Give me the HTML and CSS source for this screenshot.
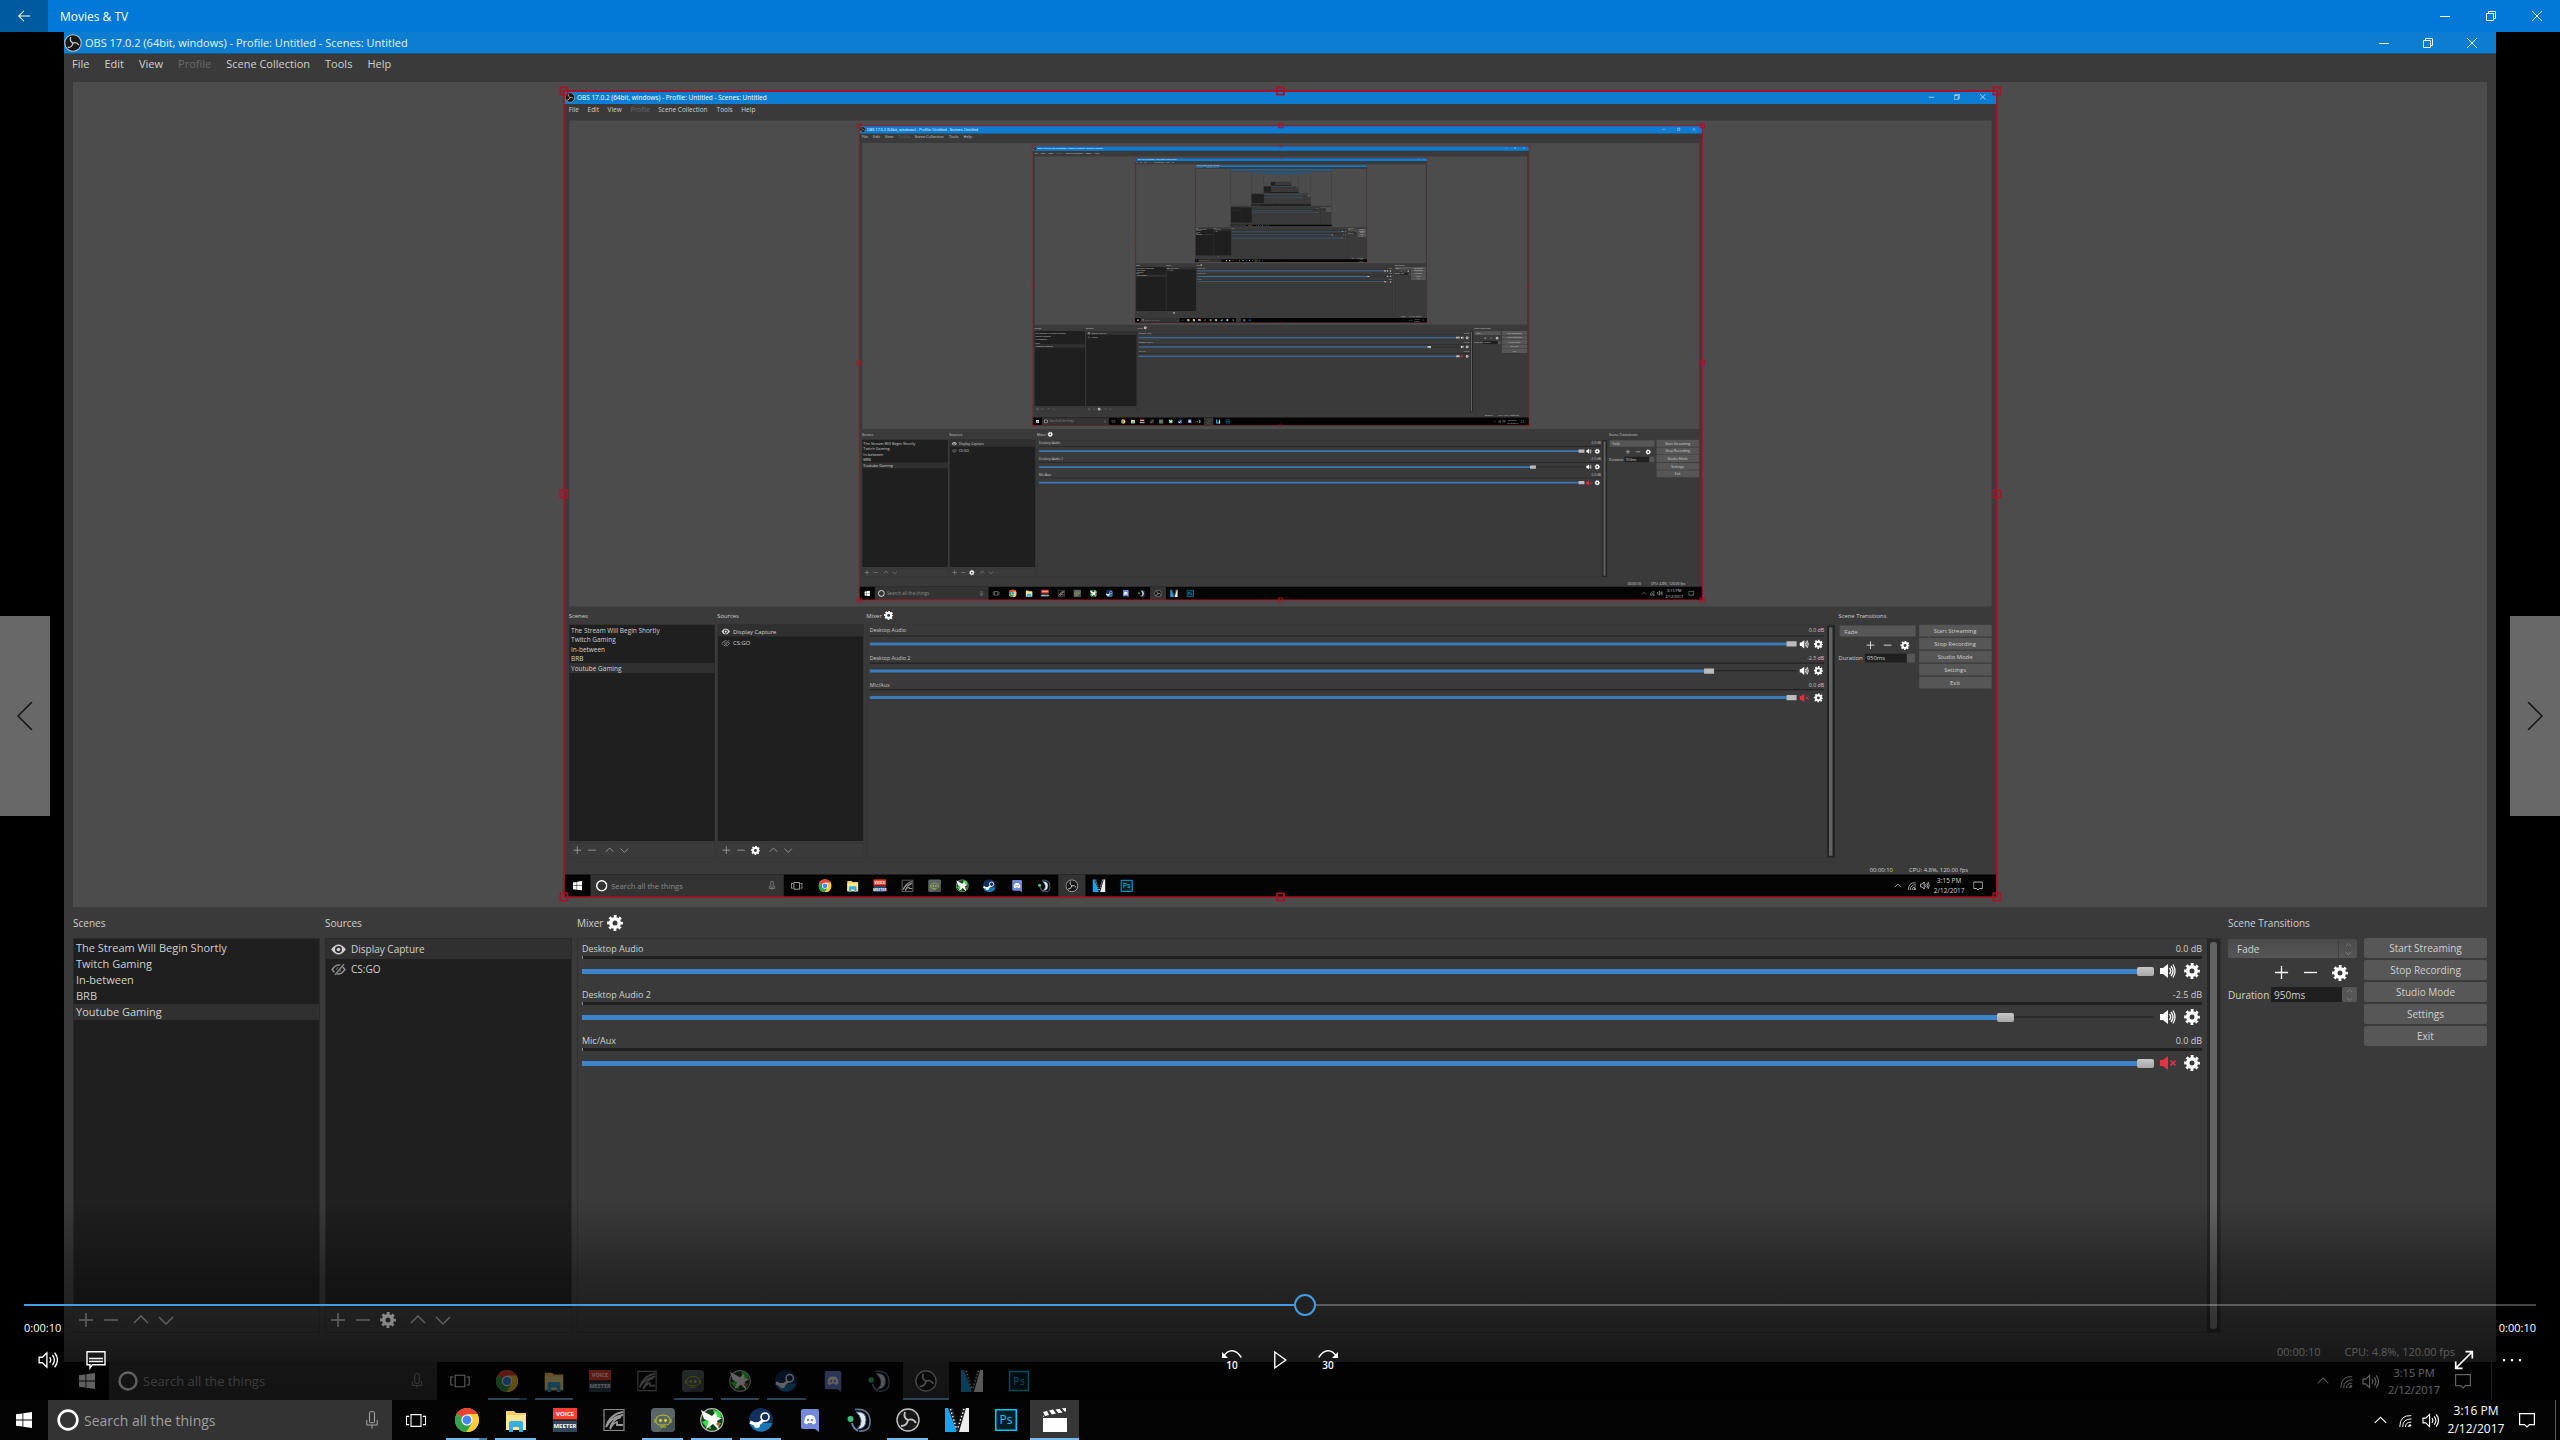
FILE: index.html
```html
<!DOCTYPE html>
<html lang="en">
<head>
    <meta charset="utf-8">
    <title>Movies &amp; TV</title>
    <link rel="stylesheet" href="styles.css">
</head>
<body>
    <!-- icon sprite -->
    <svg class="sprite" aria-hidden="true">
        <symbol id="i-back" viewBox="0 0 16 16"><path d="M15 8H2M8 2L2 8l6 6" fill="none" stroke="currentColor" stroke-width="1.2"/></symbol>
        <symbol id="i-wmin" viewBox="0 0 10 10"><path d="M0 5.5h10" stroke="currentColor"/></symbol>
        <symbol id="i-wmax" viewBox="0 0 10 10"><path d="M.5 2.500h7v7h-7zM2.500 2.500v-2h7v7h-2" fill="none" stroke="currentColor"/></symbol>
        <symbol id="i-wclose" viewBox="0 0 10 10"><path d="M0 0l10 10M10 0L0 10" stroke="currentColor"/></symbol>
        <symbol id="i-plus" viewBox="0 0 16 16"><path d="M8 1v14M1 8h14" stroke="currentColor" stroke-width="1.4"/></symbol>
        <symbol id="i-minus" viewBox="0 0 16 16"><path d="M1 8h14" stroke="currentColor" stroke-width="1.4"/></symbol>
        <symbol id="i-up" viewBox="0 0 16 16"><path d="M1 11l7-7 7 7" fill="none" stroke="currentColor" stroke-width="1.4"/></symbol>
        <symbol id="i-down" viewBox="0 0 16 16"><path d="M1 5l7 7 7-7" fill="none" stroke="currentColor" stroke-width="1.4"/></symbol>
        <symbol id="i-gear" viewBox="0 0 16 16">
            <circle cx="8" cy="8" r="4.300" fill="none" stroke="currentColor" stroke-width="3.600"/>
            <circle cx="8" cy="8" r="6.600" fill="none" stroke="currentColor" stroke-width="2.600" stroke-dasharray="2.800 2.383" stroke-dashoffset="1.400"/>
        </symbol>
        <symbol id="i-speaker" viewBox="0 0 16 16">
            <path d="M0 5h3l5-4v14l-5-4H0z" fill="currentColor"/>
            <path d="M9.500 5q2.400 3 0 6M11 3q4 5 0 10M13 1.500q4 6.500 0 13" fill="none" stroke="currentColor" stroke-width="1.300"/>
        </symbol>
        <symbol id="i-mute" viewBox="0 0 16 16">
            <path d="M0 5h3l5-4v14l-5-4H0z" fill="currentColor"/>
            <path d="M10.500 5.500l5 5M15.500 5.500l-5 5" stroke="currentColor" stroke-width="1.600"/>
        </symbol>
        <symbol id="i-eye" viewBox="0 0 16 12">
            <path d="M0 6Q8-5 16 6 8 17 0 6z" fill="currentColor"/>
            <circle cx="8" cy="6" r="3.800" fill="#2f2f2f"/><circle cx="8" cy="6" r="2" fill="currentColor"/>
        </symbol>
        <symbol id="i-eyeoff" viewBox="0 0 16 12">
            <path d="M1 6Q8-4 15 6 8 16 1 6z" fill="none" stroke="currentColor" stroke-width="1.600"/>
            <circle cx="8" cy="6" r="2.500" fill="currentColor"/>
            <path d="M3 12L13 0" stroke="#1f1f1f" stroke-width="3"/><path d="M4 12L14 0" stroke="currentColor" stroke-width="1.400"/>
        </symbol>
        <symbol id="i-win" viewBox="0 0 16 16"><path d="M0 2.300L6.500 1.400V7.600H0zM7.300 1.300L16 0v7.600H7.300zM0 8.400h6.500v6.200L0 13.700zM7.300 8.400H16V16l-8.700-1.300z" fill="currentColor"/></symbol>
        <symbol id="i-cortana" viewBox="0 0 20 20"><circle cx="10" cy="10" r="8.500" fill="none" stroke="currentColor" stroke-width="2.400"/></symbol>
        <symbol id="i-mic" viewBox="0 0 12 18"><rect x="3.500" y=".7" width="5" height="11" rx="1" fill="none" stroke="currentColor"/><path d="M.8 9v5h10.400V9M6 14v3.500" fill="none" stroke="currentColor"/></symbol>
        <symbol id="i-taskview" viewBox="0 0 22 16"><path d="M5.500 1.500h11v13h-11zM3.500 3.500h-3v9h3M18.500 3.500h3v9h-3" fill="none" stroke="currentColor" stroke-width="1.200"/></symbol>
        <symbol id="i-chrome" viewBox="0 0 24 24">
            <circle cx="12" cy="12" r="12" fill="#fc3"/>
            <path d="M12 12L1.600 6A12 12 0 0 1 22.400 6z" fill="#ea4335"/>
            <path d="M12 12L1.600 6A12 12 0 0 0 11.500 24L17 15z" fill="#2fa24f"/>
            <path d="M12 6h10.400A12 12 0 0 1 11.500 24l6-9z" fill="#fc3"/>
            <circle cx="12" cy="12" r="5.600" fill="#fff"/><circle cx="12" cy="12" r="4.400" fill="#4285f4"/>
        </symbol>
        <symbol id="i-folder" viewBox="0 0 24 24">
            <path d="M2 3h8l2 2h10v17H2z" fill="#f7cf5e"/><path d="M2 7h20v15H2z" fill="#ffe793"/>
            <path d="M5 24v-9q0-2 2-2h10q2 0 2 2v9h-4v-5H9v5z" fill="#36aee5"/>
        </symbol>
        <symbol id="i-voice" viewBox="0 0 24 24">
            <path d="M0 0h24v11.500H0z" fill="#f9402f"/><path d="M0 12.500h24V24H0z" fill="#33475c"/>
        </symbol>
        <symbol id="i-corsair" viewBox="0 0 24 24">
            <path d="M2 1.500h20v21H2z" fill="#0c0c0c" stroke="#8d8d8d" stroke-width="1.200"/>
            <path d="M21 4Q8 6 4 19q5-10 17-12M19 9q-9 2-11 12 3-6 7-7v3h6" fill="none" stroke="#9a9a9a" stroke-width="1.800"/>
        </symbol>
        <symbol id="i-bot" viewBox="0 0 24 24">
            <rect width="24" height="24" rx="4" fill="#5a6668"/><path d="M24 8v12q0 4-4 4H8z" fill="#475254"/>
            <path d="M5 14q-1-7 7-7t7 7q-1 3-3.500 3h-7q-2.500 0-3.500-3zM4 11v4M20 11v4M9 19h6" fill="none" stroke="#b9c626" stroke-width="1"/>
            <circle cx="9.500" cy="12.500" r="1.400" fill="#d6e320"/><circle cx="14.500" cy="12.500" r="1.400" fill="#d6e320"/>
        </symbol>
        <symbol id="i-green" viewBox="0 0 24 24">
            <circle cx="12" cy="12" r="11.300" fill="#14401c" stroke="#b8b8b8" stroke-width="1.200"/>
            <path d="M13 2l6 1 3 6-6 1zM2 14l7-3 2 10-5-2zM15 14l6 1-4 6z" fill="#37e043"/>
            <path d="M1 2l11 6 4-4 1 5 5 1-5 3 2 9-6-6-7 5 3-8-5-2z" fill="#fff"/><circle cx="18" cy="16" r="1.500" fill="#ea3b2a"/>
        </symbol>
        <symbol id="i-steam" viewBox="0 0 24 24">
            <circle cx="12" cy="12" r="12" fill="#12305f"/><path d="M.5 15A12 12 0 0 0 23.500 15z" fill="#1b78b4"/>
            <path d="M1 14l7 3 8-6" stroke="#fff" stroke-width="3.200" fill="none"/><circle cx="8" cy="17" r="3" fill="#fff"/>
            <circle cx="16" cy="9" r="4" fill="#12305f" stroke="#fff" stroke-width="1.600"/>
        </symbol>
        <symbol id="i-discord" viewBox="0 0 24 24">
            <path d="M3 3q0-2 2-2h14q2 0 2 2v21l-4-3H5q-2 0-2-2z" fill="#7289da"/>
            <path d="M8 8q4-2 8 0 2 3 2 7l-3 1.500-1-1.500h-4l-1 1.500L6 15q0-4 2-7z" fill="#fff"/>
            <circle cx="10" cy="12" r="1.300" fill="#7289da"/><circle cx="14" cy="12" r="1.300" fill="#7289da"/>
        </symbol>
        <symbol id="i-teamspeak" viewBox="0 0 24 24">
            <path d="M8 1.500q14-1.500 15 10.500T12 23" fill="none" stroke="#5d7894" stroke-width="1.600"/>
            <path d="M9 4q10-1 10 8t-9 9q5-4 4-9T9 4z" fill="#dfe8f0" stroke="#54708c" stroke-width="1"/>
            <circle cx="3.500" cy="11" r="3" fill="#3ec07c"/><path d="M5 15q1 5 6 8" stroke="#6b8bab" stroke-width="1.800" fill="none"/>
        </symbol>
        <symbol id="i-obs" viewBox="0 0 24 24">
            <circle cx="12" cy="12" r="11" fill="#171717" stroke="#c4c4c4" stroke-width="1.400"/>
            <path d="M12 12Q7 10 9 4M12 12q5-2 8 3M12 12q-1 6-7 6" fill="none" stroke="#c4c4c4" stroke-width="1.800"/>
        </symbol>
        <symbol id="i-vegas" viewBox="0 0 24 24">
            <path d="M0 0h7l5 24H0z" fill="#1ea0ea"/><path d="M24 0h-6l-6 24h12z" fill="#ececec"/>
            <path d="M3 0h5l5 16-1 8zM21 0h-4l-6 24h3z" fill="#1b1b1b"/>
            <path d="M5.500 1l6 20M19 1l-6.500 20" stroke="#fff" stroke-width="1.400" stroke-dasharray="1.400 2.200"/>
        </symbol>
        <symbol id="i-ps" viewBox="0 0 24 24">
            <path d="M1.700 1.700h20.600v20.600H1.700z" fill="#001d26" stroke="#00c8ff" stroke-width="1.600"/>
        </symbol>
        <symbol id="i-movie" viewBox="0 0 24 24">
            <path d="M0 10h24v14H0z" fill="#fff"/>
            <path d="M0 4l4-1 2 4-4 1zM6 2.600l4-1 3 4-4 1zM12.500 1.500l4-.8 3 3.800-4 .8zM19 .3l4-.3v3l-1 1zM0 7l1 2H0z" fill="#fff"/>
        </symbol>
        <symbol id="i-wifi" viewBox="0 0 16 16"><path d="M1 16Q1 1 15 2M4.500 16q0-10 11-10M8 16q0-6 7-6M11 16q0-2 4-2" fill="none" stroke="currentColor" stroke-width="1.200"/><circle cx="13.500" cy="14" r="1.500" fill="currentColor"/></symbol>
        <symbol id="i-vol" viewBox="0 0 18 16"><path d="M1 5.500h3l4-4v13l-4-4H1zM10.500 5.500q2 2.500 0 5M13 3.500q3.500 4.500 0 9M15 1.500q5 6.500 0 13" fill="none" stroke="currentColor" stroke-width="1.200"/></symbol>
        <symbol id="i-notif" viewBox="0 0 16 16"><path d="M.6 1.600h14.800v11H10.500L8 15l-2.500-2.400H.6z" fill="none" stroke="currentColor" stroke-width="1.200"/></symbol>
        <symbol id="i-cc" viewBox="0 0 20 20"><path d="M1 1.700h18v13H6.500L4 18v-3.300H1z" fill="none" stroke="currentColor" stroke-width="1.400"/><path d="M3 8.500h14M3 11.500h14" stroke="currentColor" stroke-width="1.300"/></symbol>
        <symbol id="i-play" viewBox="0 0 20 20"><path d="M4.800 2v16l11-8z" fill="none" stroke="currentColor" stroke-width="1.400"/></symbol>
        <symbol id="i-expand" viewBox="0 0 20 20"><path d="M2 18L18 2M11.500 1.700h6.800v6.800M1.700 11.500v6.800h6.800" fill="none" stroke="currentColor" stroke-width="1.700"/></symbol>
        <symbol id="i-more" viewBox="0 0 20 20"><path d="M1 9h2.200v2.200H1zM8.900 9h2.200v2.200H8.900zM16.800 9H19v2.200h-2.200z" fill="currentColor"/></symbol>
        <symbol id="i-prev" viewBox="0 0 16 28"><path d="M15 0L1 14l14 14" fill="none" stroke="currentColor" stroke-width="1.500"/></symbol>
        <symbol id="i-next" viewBox="0 0 16 28"><path d="M1 0l14 14L1 28" fill="none" stroke="currentColor" stroke-width="1.500"/></symbol>
    </svg>

    <header class="titlebar">
        <button class="back" aria-label="Back"><svg width="14" height="14"><use href="#i-back"/></svg></button>
        <span class="title">Movies &amp; TV</span>
        <div class="window-buttons">
            <button aria-label="Minimize"><svg width="10" height="10"><use href="#i-wmin"/></svg></button>
            <button aria-label="Restore"><svg width="10" height="10"><use href="#i-wmax"/></svg></button>
            <button aria-label="Close"><svg width="10" height="10"><use href="#i-wclose"/></svg></button>
        </div>
    </header>

    <main class="stage">
        <div class="video">
            <div class="obs-title">
                <svg width="18" height="18"><use href="#i-obs"/></svg>
                <span>OBS 17.0.2 (64bit, windows) - Profile: Untitled - Scenes: Untitled</span>
                <div class="window-buttons">
                    <button aria-label="Minimize"><svg width="10" height="10"><use href="#i-wmin"/></svg></button>
                    <button aria-label="Restore"><svg width="10" height="10"><use href="#i-wmax"/></svg></button>
                    <button aria-label="Close"><svg width="10" height="10"><use href="#i-wclose"/></svg></button>
                </div>
            </div>
            <nav class="menu">
                <button>File</button>
                <button>Edit</button>
                <button>View</button>
                <button disabled>Profile</button>
                <button>Scene Collection</button>
                <button>Tools</button>
                <button>Help</button>
            </nav>

            <div class="preview">
                <!-- captured display, every level holds the next one at the same place -->
                <svg class="capture" viewBox="0 0 2432 1368">
                    <defs>
                        <g id="select-box" fill="none" stroke="#a51426" stroke-width="3">
                            <path d="M0 0h2432v1368H0z"/>
                            <path d="M-6-6H6V6H-6zM2426-6h12V6h-12zM-6 1362H6v12H-6zM2426 1362h12v12h-12zM1210-6h12V6h-12zM1210 1362h12v12h-12zM-6 678H6v12H-6zM2426 678h12v12h-12z"/>
                        </g>
                        <g id="level-9"><use href="#screen"/></g>
                        <g id="level-8"><use href="#screen"/><use href="#level-9" transform="translate(501 59) scale(.5884)"/></g>
                        <g id="level-7"><use href="#screen"/><use href="#level-8" transform="translate(501 59) scale(.5884)"/></g>
                        <g id="level-6"><use href="#screen"/><use href="#level-7" transform="translate(501 59) scale(.5884)"/></g>
                        <g id="level-5"><use href="#screen"/><use href="#level-6" transform="translate(501 59) scale(.5884)"/><use href="#select-box" opacity=".4"/></g>
                        <g id="level-4"><use href="#screen"/><use href="#level-5" transform="translate(501 59) scale(.5884)"/><use href="#select-box" opacity=".5"/></g>
                        <g id="level-3"><use href="#screen"/><use href="#level-4" transform="translate(501 59) scale(.5884)"/><use href="#select-box" opacity=".7"/></g>
                        <g id="level-2"><use href="#screen"/><use href="#level-3" transform="translate(501 59) scale(.5884)"/><use href="#select-box"/></g>
                    </defs>
                    <g id="screen">
                        <path d="M0 0h2432v1368H0z" fill="#3a3a3a"/>
                        <path d="M0 0h2432v22H0z" fill="#0c7dd0"/>
                        <use href="#i-obs" x="1" y="2" width="18" height="18"/>
                        <g class="c-text">
                            <text x="22" y="15" fill="#fff">OBS 17.0.2 (64bit, windows) - Profile: Untitled - Scenes: Untitled</text>
                            <text x="8" y="36">File</text><text x="40" y="36">Edit</text><text x="74" y="36">View</text>
                            <text x="113" y="36" class="c-off">Profile</text><text x="160" y="36">Scene Collection</text>
                            <text x="259" y="36">Tools</text><text x="301" y="36">Help</text>
                        </g>
                        <g color="#fff">
                            <use href="#i-wmin" x="2316" y="5" width="10" height="10"/>
                            <use href="#i-wmax" x="2359" y="5" width="10" height="10"/>
                            <use href="#i-wclose" x="2403" y="5" width="10" height="10"/>
                        </g>
                        <path d="M9 50h2414v825H9z" fill="#4c4c4c"/>
                        <path d="M9 906h247v367H9zM261 906h247v367H261z" fill="#1f1f1f"/>
                        <path d="M9 971h247v17H9zM261 906h247v20H261z" fill="#303030"/>
                        <path d="M9 1276h247v25H9zM261 1276h247v25H261zM514 906h1642v395H514z" fill="none" stroke="#333"/>
                        <g class="c-text">
                            <text x="12" y="920">The Stream Will Begin Shortly</text><text x="12" y="936">Twitch Gaming</text>
                            <text x="12" y="952">In-between</text><text x="12" y="968">BRB</text><text x="12" y="984">Youtube Gaming</text>
                        </g>
                        <g class="c-label">
                            <text x="8" y="895">Scenes</text><text x="260" y="895">Sources</text><text x="513" y="895">Mixer</text>
                            <text x="2163" y="895">Scene Transitions</text>
                            <text x="287" y="921">Display Capture</text><text x="287" y="941">CS:GO</text>
                        </g>
                        <use href="#i-eye" x="267" y="912" width="15" height="11" color="#ddd"/>
                        <use href="#i-eyeoff" x="267" y="932" width="15" height="11" color="#999"/>
                        <use href="#i-gear" x="543" y="882" width="16" height="16" color="#fff"/>
                        <g color="#aaa">
                            <use href="#i-plus" x="15" y="1281" width="15" height="15"/><use href="#i-minus" x="40" y="1281" width="15" height="15"/>
                            <use href="#i-up" x="70" y="1281" width="15" height="15"/><use href="#i-down" x="95" y="1281" width="15" height="15"/>
                            <use href="#i-plus" x="268" y="1281" width="15" height="15"/><use href="#i-minus" x="293" y="1281" width="15" height="15"/>
                            <use href="#i-up" x="348" y="1281" width="15" height="15"/><use href="#i-down" x="373" y="1281" width="15" height="15"/>
                        </g>
                        <use href="#i-gear" x="317" y="1281" width="16" height="16" color="#fff"/>
                        <path d="M519 924h1620v2H519zM519 970h1620v2H519zM519 1015h1620v2H519zM1940 983h152v2h-152zM2144 907h13v394h-13z" fill="#222"/>
                        <path d="M519 936h1560v5H519zM519 982h1420v5H519zM519 1027h1560v5H519z" fill="#3b7ab8"/>
                        <path d="M2075 934h17v9h-17zM1935 980h17v9h-17zM2075 1025h17v9h-17z" fill="#bbb"/>
                        <path d="M2147 910h6v388h-6z" fill="#626262"/>
                        <g color="#fff">
                            <use href="#i-speaker" x="2097" y="931" width="16" height="16"/><use href="#i-gear" x="2121" y="931" width="16" height="16"/>
                            <use href="#i-speaker" x="2097" y="976" width="16" height="16"/><use href="#i-gear" x="2121" y="976" width="16" height="16"/>
                            <use href="#i-mute" x="2097" y="1022" width="16" height="16" color="#e03040"/><use href="#i-gear" x="2121" y="1022" width="16" height="16"/>
                            <use href="#i-plus" x="2210" y="933" width="15" height="15"/><use href="#i-minus" x="2239" y="933" width="15" height="15"/><use href="#i-gear" x="2268" y="933" width="16" height="16"/>
                        </g>
                        <g class="c-small">
                            <text x="519" y="919">Desktop Audio</text><text x="519" y="965">Desktop Audio 2</text><text x="519" y="1011">Mic/Aux</text>
                            <text x="2139" y="919" text-anchor="end">0.0 dB</text><text x="2139" y="965" text-anchor="end">-2.5 dB</text><text x="2139" y="1011" text-anchor="end">0.0 dB</text>
                        </g>
                        <path d="M2165 907h129v19h-129zM2279 955h14v15h-14zM2300 906h123v20h-123zM2300 928h123v20h-123zM2300 950h123v20h-123zM2300 972h123v20h-123zM2300 994h123v20h-123z" fill="#565656"/>
                        <path d="M2208 955h71v15h-71z" fill="#1f1f1f"/>
                        <g class="c-label">
                            <text x="2173" y="921">Fade</text><text x="2163" y="966">Duration</text><text x="2211" y="966">950ms</text>
                            <g text-anchor="middle">
                                <text x="2361" y="920">Start Streaming</text><text x="2361" y="942">Stop Recording</text><text x="2361" y="964">Studio Mode</text>
                                <text x="2361" y="986">Settings</text><text x="2361" y="1008">Exit</text>
                            </g>
                            <text x="2216" y="1325">00:00:10</text><text x="2283" y="1325">CPU: 4.8%, 120.00 fps</text>
                        </g>
                        <path d="M0 1330h2432v38H0z" fill="#040404"/>
                        <path d="M45 1330h328v38H45zM839 1330h46v38h-46z" fill="#333"/>
                        <g color="#fff">
                            <use href="#i-win" x="15" y="1341" width="16" height="16"/>
                            <use href="#i-cortana" x="54" y="1339" width="20" height="20"/>
                            <use href="#i-mic" x="347" y="1341" width="12" height="16" color="#aaa"/>
                            <use href="#i-taskview" x="385" y="1342" width="20" height="14"/>
                            <use href="#i-up" x="2258" y="1343" width="12" height="12"/><use href="#i-wifi" x="2281" y="1342" width="14" height="14"/>
                            <use href="#i-vol" x="2301" y="1341" width="17" height="15"/><use href="#i-notif" x="2392" y="1341" width="16" height="16"/>
                        </g>
                        <text x="80" y="1354" class="c-search">Search all the things</text>
                        <use href="#i-chrome" x="432" y="1338" width="22" height="22"/><use href="#i-folder" x="479" y="1338" width="22" height="22"/>
                        <use href="#i-voice" x="525" y="1338" width="22" height="22"/><use href="#i-corsair" x="572" y="1338" width="22" height="22"/>
                        <use href="#i-bot" x="618" y="1338" width="22" height="22"/><use href="#i-green" x="665" y="1338" width="22" height="22"/>
                        <use href="#i-steam" x="711" y="1338" width="22" height="22"/><use href="#i-discord" x="758" y="1338" width="22" height="22"/>
                        <use href="#i-teamspeak" x="804" y="1338" width="22" height="22"/><use href="#i-obs" x="851" y="1338" width="22" height="22"/>
                        <use href="#i-vegas" x="897" y="1338" width="22" height="22"/><use href="#i-ps" x="944" y="1338" width="22" height="22"/>
                        <text x="536" y="1346" class="vm">VOICE</text><text x="536" y="1357" class="vm">MEETER</text><text x="955" y="1353" class="ps">Ps</text>
                        <g class="c-text" text-anchor="middle"><text x="2351" y="1345">3:15 PM</text><text x="2351" y="1362">2/12/2017</text></g>
                    </g>
                    <use href="#level-2" transform="translate(501 59) scale(.5884)"/>
                    <use href="#select-box"/>
                </svg>
            </div>

            <div class="docks">
                <section class="dock">
                    <h2>Scenes</h2>
                    <ul class="list scenes">
                        <li>The Stream Will Begin Shortly</li>
                        <li>Twitch Gaming</li>
                        <li>In-between</li>
                        <li>BRB</li>
                        <li class="selected">Youtube Gaming</li>
                    </ul>
                    <div class="dock-tools">
                        <button aria-label="Add scene"><svg><use href="#i-plus"/></svg></button>
                        <button aria-label="Remove scene"><svg><use href="#i-minus"/></svg></button>
                        <button class="spaced" aria-label="Move scene up"><svg><use href="#i-up"/></svg></button>
                        <button aria-label="Move scene down"><svg><use href="#i-down"/></svg></button>
                    </div>
                </section>
                <section class="dock">
                    <h2>Sources</h2>
                    <ul class="list sources">
                        <li class="selected"><svg width="15" height="11"><use href="#i-eye"/></svg>Display Capture</li>
                        <li class="hidden-source"><svg width="15" height="11"><use href="#i-eyeoff"/></svg>CS:GO</li>
                    </ul>
                    <div class="dock-tools">
                        <button aria-label="Add source"><svg><use href="#i-plus"/></svg></button>
                        <button aria-label="Remove source"><svg><use href="#i-minus"/></svg></button>
                        <button class="gear" aria-label="Source properties"><svg><use href="#i-gear"/></svg></button>
                        <button class="spaced" aria-label="Move source up"><svg><use href="#i-up"/></svg></button>
                        <button aria-label="Move source down"><svg><use href="#i-down"/></svg></button>
                    </div>
                </section>
                <section class="dock">
                    <h2>Mixer <button aria-label="Mixer settings"><svg width="16" height="16"><use href="#i-gear"/></svg></button></h2>
                    <div class="mixer">
                        <div class="tracks">
                            <div class="track">
                                <div class="track-head"><label for="vol1">Desktop Audio</label><span>0.0 dB</span></div>
                                <div class="meter"></div>
                                <div class="track-row">
                                    <input type="range" id="vol1" class="volume" value="100" style="--v: 100%">
                                    <button aria-label="Mute"><svg width="16" height="16"><use href="#i-speaker"/></svg></button>
                                    <button aria-label="Audio settings"><svg width="16" height="16"><use href="#i-gear"/></svg></button>
                                </div>
                            </div>
                            <div class="track">
                                <div class="track-head"><label for="vol2">Desktop Audio 2</label><span>-2.5 dB</span></div>
                                <div class="meter"></div>
                                <div class="track-row">
                                    <input type="range" id="vol2" class="volume" value="91" style="--v: 91%">
                                    <button aria-label="Mute"><svg width="16" height="16"><use href="#i-speaker"/></svg></button>
                                    <button aria-label="Audio settings"><svg width="16" height="16"><use href="#i-gear"/></svg></button>
                                </div>
                            </div>
                            <div class="track">
                                <div class="track-head"><label for="vol3">Mic/Aux</label><span>0.0 dB</span></div>
                                <div class="meter"></div>
                                <div class="track-row">
                                    <input type="range" id="vol3" class="volume" value="100" style="--v: 100%">
                                    <button class="muted" aria-label="Unmute"><svg width="16" height="16"><use href="#i-mute"/></svg></button>
                                    <button aria-label="Audio settings"><svg width="16" height="16"><use href="#i-gear"/></svg></button>
                                </div>
                            </div>
                        </div>
                        <div class="scrollbar"><div class="thumb"></div></div>
                    </div>
                </section>
                <section class="dock transitions">
                    <h2><label for="transition">Scene Transitions</label></h2>
                    <div class="select-wrap">
                        <select id="transition"><option>Fade</option></select>
                        <span class="arrows"><svg><use href="#i-up"/></svg><svg><use href="#i-down"/></svg></span>
                    </div>
                    <div class="transition-tools">
                        <button aria-label="Add transition"><svg width="15" height="15"><use href="#i-plus"/></svg></button>
                        <button aria-label="Remove transition"><svg width="15" height="15"><use href="#i-minus"/></svg></button>
                        <button aria-label="Transition settings"><svg width="16" height="16"><use href="#i-gear"/></svg></button>
                    </div>
                    <div class="duration">
                        <label for="duration">Duration</label>
                        <input type="text" id="duration" value="950ms">
                        <span class="spin"><svg><use href="#i-up"/></svg><svg><use href="#i-down"/></svg></span>
                    </div>
                </section>
                <section class="dock controls">
                    <button>Start Streaming</button>
                    <button>Stop Recording</button>
                    <button>Studio Mode</button>
                    <button>Settings</button>
                    <button>Exit</button>
                </section>
            </div>
            <div class="status"><span>00:00:10</span><span>CPU: 4.8%, 120.00 fps</span></div>

            <div class="taskbar recorded">
                <button class="start" aria-label="Start"><svg width="16" height="16"><use href="#i-win"/></svg></button>
                <div class="search">
                    <svg width="20" height="20"><use href="#i-cortana"/></svg>
                    <input type="text" placeholder="Search all the things" aria-label="Search all the things">
                    <svg class="mic" width="12" height="16"><use href="#i-mic"/></svg>
                </div>
                <button class="taskview" aria-label="Task view"><svg width="20" height="14"><use href="#i-taskview"/></svg></button>
                <div class="apps">
                    <button class="open many" aria-label="Chrome"><svg><use href="#i-chrome"/></svg></button>
                    <button class="open" aria-label="File Explorer"><svg><use href="#i-folder"/></svg></button>
                    <button aria-label="Voicemeeter"><svg viewBox="0 0 24 24"><use href="#i-voice"/><text x="12" y="8" class="vm">VOICE</text><text x="12" y="20" class="vm">MEETER</text></svg></button>
                    <button aria-label="Corsair"><svg><use href="#i-corsair"/></svg></button>
                    <button class="open" aria-label="Bot"><svg><use href="#i-bot"/></svg></button>
                    <button class="open" aria-label="Launcher"><svg><use href="#i-green"/></svg></button>
                    <button class="open" aria-label="Steam"><svg><use href="#i-steam"/></svg></button>
                    <button aria-label="Discord"><svg><use href="#i-discord"/></svg></button>
                    <button aria-label="TeamSpeak"><svg><use href="#i-teamspeak"/></svg></button>
                    <button class="open active" aria-label="OBS"><svg><use href="#i-obs"/></svg></button>
                    <button aria-label="Vegas"><svg><use href="#i-vegas"/></svg></button>
                    <button aria-label="Photoshop"><svg viewBox="0 0 24 24"><use href="#i-ps"/><text x="12" y="16" class="ps">Ps</text></svg></button>
                </div>
                <div class="tray">
                    <svg width="12" height="12"><use href="#i-up"/></svg>
                    <svg width="13" height="13"><use href="#i-wifi"/></svg>
                    <svg width="17" height="15"><use href="#i-vol"/></svg>
                    <div class="clock"><span>3:15 PM</span><span>2/12/2017</span></div>
                    <svg width="16" height="16"><use href="#i-notif"/></svg>
                </div>
            </div>
        </div>

        <button class="side prev" aria-label="Previous"><svg width="16" height="28"><use href="#i-prev"/></svg></button>
        <button class="side next" aria-label="Next"><svg width="16" height="28"><use href="#i-next"/></svg></button>

        <div class="player">
            <input type="range" class="seek" aria-label="Seek" value="51" style="--v: 51%">
            <div class="times"><span>0:00:10</span><span>0:00:10</span></div>
            <div class="player-buttons">
                <div class="left">
                    <button aria-label="Volume"><svg width="20" height="18"><use href="#i-vol"/></svg></button>
                    <button aria-label="Subtitles"><svg width="20" height="20"><use href="#i-cc"/></svg></button>
                </div>
                <div class="middle">
                    <button aria-label="Back 10 seconds">
                        <svg width="20" height="20" viewBox="0 0 20 20"><path d="M19.300 7.500Q15 .8 10 .8T1.500 6.500" fill="none" stroke="currentColor" stroke-width="1.500"/><path d="M0 2v6h6z" fill="currentColor"/><text x="10" y="19" class="skip">10</text></svg>
                    </button>
                    <button aria-label="Play"><svg width="20" height="20"><use href="#i-play"/></svg></button>
                    <button aria-label="Forward 30 seconds">
                        <svg width="20" height="20" viewBox="0 0 20 20"><path d="M.7 7.500Q5 .8 10 .8t8.500 5.700" fill="none" stroke="currentColor" stroke-width="1.500"/><path d="M20 2v6h-6z" fill="currentColor"/><text x="10" y="19" class="skip">30</text></svg>
                    </button>
                </div>
                <div class="right">
                    <button aria-label="Full screen"><svg width="20" height="20"><use href="#i-expand"/></svg></button>
                    <button aria-label="More"><svg width="20" height="20"><use href="#i-more"/></svg></button>
                </div>
            </div>
        </div>
    </main>

    <footer class="taskbar">
        <button class="start" aria-label="Start"><svg width="16" height="16"><use href="#i-win"/></svg></button>
        <div class="search">
            <svg width="22" height="22"><use href="#i-cortana"/></svg>
            <input type="text" placeholder="Search all the things" aria-label="Search all the things">
            <svg class="mic" width="12" height="18"><use href="#i-mic"/></svg>
        </div>
        <button class="taskview" aria-label="Task view"><svg width="20" height="15"><use href="#i-taskview"/></svg></button>
        <div class="apps">
            <button class="open many" aria-label="Chrome"><svg><use href="#i-chrome"/></svg></button>
            <button class="open" aria-label="File Explorer"><svg><use href="#i-folder"/></svg></button>
            <button aria-label="Voicemeeter"><svg viewBox="0 0 24 24"><use href="#i-voice"/><text x="12" y="8" class="vm">VOICE</text><text x="12" y="20" class="vm">MEETER</text></svg></button>
            <button aria-label="Corsair"><svg><use href="#i-corsair"/></svg></button>
            <button class="open" aria-label="Bot"><svg><use href="#i-bot"/></svg></button>
            <button class="open" aria-label="Launcher"><svg><use href="#i-green"/></svg></button>
            <button class="open" aria-label="Steam"><svg><use href="#i-steam"/></svg></button>
            <button aria-label="Discord"><svg><use href="#i-discord"/></svg></button>
            <button aria-label="TeamSpeak"><svg><use href="#i-teamspeak"/></svg></button>
            <button class="open" aria-label="OBS"><svg><use href="#i-obs"/></svg></button>
            <button aria-label="Vegas"><svg><use href="#i-vegas"/></svg></button>
            <button aria-label="Photoshop"><svg viewBox="0 0 24 24"><use href="#i-ps"/><text x="12" y="16" class="ps">Ps</text></svg></button>
            <button class="open active" aria-label="Movies &amp; TV"><svg><use href="#i-movie"/></svg></button>
        </div>
        <div class="tray">
            <svg width="13" height="13"><use href="#i-up"/></svg>
            <svg width="13" height="13"><use href="#i-wifi"/></svg>
            <svg width="17" height="15"><use href="#i-vol"/></svg>
            <div class="clock"><span>3:16 PM</span><span>2/12/2017</span></div>
            <svg width="16" height="16"><use href="#i-notif"/></svg>
        </div>
    </footer>
</body>
</html>
```
FILE: styles.css
```css
* {
    box-sizing: border-box;
}
body {
    margin: 0;
    height: 100vh;
    display: flex;
    flex-direction: column;
    background: #000;
    color: #fff;
    font-family: "Open Sans", "Noto Sans", sans-serif;
    font-size: 12px;
    overflow: hidden;
}
button, input, select {
    margin: 0;
    padding: 0;
    border: 0;
    background: none;
    color: inherit;
    font: inherit;
}
button {
    display: flex;
    align-items: center;
    justify-content: center;
}
svg {
    display: block;
    flex: none;
}
.sprite {
    display: none;
}

/* app title bar */
.titlebar {
    display: flex;
    align-items: center;
    height: 32px;
    background: #0078d7;
}
.back {
    width: 48px;
    height: 32px;
    background: #005a9e;
}
.title {
    margin-left: 12px;
}
.window-buttons {
    display: flex;
    margin-left: auto;
}
.window-buttons button {
    width: 46px;
    height: 32px;
}

/* video area */
.stage {
    position: relative;
    flex: 1;
    min-height: 0;
    padding: 0 2.5%;
}
.video {
    display: flex;
    flex-direction: column;
    height: 100%;
    background: #3a3a3a;
    color: #d0d0d0;
    font-size: 11px;
}
.obs-title {
    display: flex;
    align-items: center;
    height: 22px;
    gap: 3px;
    background: #0c7dd0;
    border-bottom: 1px solid #1b5583;
    color: #e8f4ff;
}
.obs-title .window-buttons {
    margin-right: 2px;
}
.obs-title .window-buttons button {
    width: 44px;
    height: 20px;
}
.menu {
    display: flex;
    height: 28px;
    padding: 1px 8px 0;
    gap: 15px;
    align-items: flex-start;
}
.menu button {
    height: 16px;
}
.menu button:disabled {
    color: #6a6a6a;
}
.preview {
    flex: 825 0 0;
    min-height: 0;
    margin: 0 9px;
    display: flex;
    align-items: center;
    justify-content: center;
    background: #4c4c4c;
}
.capture {
    height: 97.7%;
    aspect-ratio: 2432 / 1368;
    overflow: visible;
}
.c-text {
    font-size: 11px;
    fill: #d0d0d0;
}
.c-label {
    font-size: 10px;
    fill: #d0d0d0;
}
.c-small {
    font-size: 9px;
    fill: #c8c8c8;
}
.c-off {
    fill: #6a6a6a;
}
.c-search {
    font-size: 13px;
    fill: #8c8c8c;
}

/* docks */
.docks {
    flex: 426 0 0;
    min-height: 0;
    display: grid;
    grid-template-columns: 247px 247px 1fr 133px 123px;
    gap: 5px;
    padding: 0 9px 5px;
    font-size: 10px;
}
.dock {
    display: flex;
    flex-direction: column;
    min-height: 0;
}
.dock h2 {
    display: flex;
    align-items: center;
    gap: 4px;
    height: 31px;
    margin: 0;
    font-size: 10px;
    font-weight: normal;
}
.dock h2 button {
    color: #fff;
}
.list {
    flex: 1;
    margin: 0;
    padding: 0;
    list-style: none;
    background: #1f1f1f;
    border: 1px solid #2a2a2a;
}
.list .selected {
    background: #303030;
}
.scenes {
    padding-top: 1px;
    font-size: 11px;
}
.scenes li {
    height: 16px;
    line-height: 16px;
    padding-left: 2px;
}
.sources li {
    display: flex;
    align-items: center;
    gap: 5px;
    height: 20px;
    padding-left: 5px;
}
.hidden-source svg {
    color: #8c8c8c;
}
.dock-tools {
    display: flex;
    align-items: center;
    gap: 9px;
    height: 26px;
    padding-left: 4px;
    border: 1px solid #313131;
    color: #bbb;
}
.dock-tools svg {
    width: 16px;
    height: 16px;
}
.dock-tools .spaced {
    margin-left: 5px;
}
.dock-tools .gear {
    color: #fff;
}
.mixer {
    flex: 1;
    display: flex;
    border: 1px solid #313131;
}
.tracks {
    flex: 1;
    padding: 2px 5px 0 4px;
}
.track {
    height: 46px;
}
.track-head {
    display: flex;
    justify-content: space-between;
    height: 15px;
    line-height: 15px;
    font-size: 9px;
}
.meter {
    height: 3px;
    background: #202020;
    border-left: 1px solid #888;
}
.track-row {
    display: flex;
    align-items: center;
    gap: 8px;
    height: 24px;
    color: #fff;
}
.track-row button:last-child {
    margin-right: 2px;
}
.track-row .muted {
    color: #e23244;
}
.volume {
    appearance: none;
    flex: 1;
    height: 10px;
    margin-right: -2px;
    background: linear-gradient(#3d84cc, #3d84cc) 0 50% / var(--v) 5px no-repeat,
                linear-gradient(#2c2c2c, #2c2c2c) 0 50% / 100% 2px no-repeat;
}
.volume::-webkit-slider-thumb {
    appearance: none;
    width: 17px;
    height: 9px;
    border-radius: 2px;
    background: linear-gradient(#c6c6c6, #a8a8a8);
}
.scrollbar {
    width: 13px;
    padding: 3px;
    background: #272727;
}
.scrollbar .thumb {
    height: 100%;
    border-radius: 3px;
    background: #626262;
}
.transitions {
    padding: 0 2px;
}
.select-wrap {
    display: flex;
    height: 19px;
    margin-top: 1px;
    border-radius: 2px;
    background: linear-gradient(#4a4a4a, #565656);
}
.select-wrap select {
    appearance: none;
    flex: 1;
    padding-left: 9px;
}
.arrows, .spin {
    display: flex;
    flex-direction: column;
    align-items: center;
    justify-content: center;
    gap: 2px;
    color: #999;
}
.arrows {
    width: 19px;
    border-left: 1px solid #404040;
}
.arrows svg, .spin svg {
    width: 7px;
    height: 6px;
}
.transition-tools {
    display: flex;
    justify-content: flex-end;
    align-items: center;
    gap: 14px;
    height: 29px;
    padding-right: 9px;
    color: #fff;
}
.duration {
    display: flex;
    align-items: center;
    height: 15px;
}
.duration label {
    width: 43px;
}
.duration input {
    flex: 1;
    min-width: 0;
    height: 15px;
    padding-left: 3px;
    background: #1f1f1f;
}
.spin {
    width: 15px;
    height: 15px;
    border-radius: 2px;
    background: #565656;
}
.controls {
    gap: 2px;
    padding-top: 31px;
}
.controls button {
    height: 20px;
    border-radius: 2px;
    background: #575757;
}
.status {
    display: flex;
    justify-content: flex-end;
    gap: 24px;
    height: 24px;
    padding-right: 41px;
    line-height: 28px;
}

/* windows taskbar, also the recorded one inside the video */
.taskbar {
    display: flex;
    height: 40px;
    background: #040404;
    color: #fff;
}
.start, .taskview {
    width: 48px;
}
.search {
    display: flex;
    align-items: center;
    gap: 5px;
    width: 344px;
    padding: 0 14px 0 9px;
    background: #333;
    font-size: 14px;
}
.search input {
    flex: 1;
    min-width: 0;
}
.search input::placeholder {
    color: #a0a0a0;
}
.mic {
    color: #a8a8a8;
}
.apps {
    display: flex;
    width: 637px;
    margin-left: 2px;
}
.apps button {
    position: relative;
    flex: 1;
}
.apps svg {
    width: 24px;
    height: 24px;
}
.apps .active {
    background: #363636;
}
.apps .open::after {
    content: "";
    position: absolute;
    left: 4px;
    right: 4px;
    bottom: 0;
    height: 2px;
    background: #76b9ed;
}
.apps .many::after {
    background: linear-gradient(90deg, #76b9ed 80%, #4a7fa8 80%);
}
.apps .active::after {
    left: 0;
    right: 0;
}
.tray {
    display: flex;
    align-items: center;
    gap: 10px;
    margin: 0 4px 0 auto;
    padding-right: 20px;
    border-right: 1px solid #555;
}
.tray svg:first-child {
    margin-right: 2px;
}
.clock {
    display: flex;
    flex-direction: column;
    align-items: center;
    width: 54px;
    line-height: 18px;
}
.clock + svg {
    margin-left: 6px;
}
.recorded {
    height: 38px;
    font-size: 11px;
}
.recorded .start, .recorded .taskview {
    width: 45px;
}
.recorded .search {
    width: 328px;
    font-size: 13px;
}
.recorded .apps {
    width: 558px;
}
.recorded .apps svg {
    width: 22px;
    height: 22px;
}
.recorded .tray {
    gap: 9px;
}
.recorded .clock {
    width: 52px;
    line-height: 17px;
}

/* previous / next */
.side {
    position: absolute;
    top: 50%;
    width: 50px;
    height: 200px;
    margin-top: -100px;
    background: #686868;
    color: #111;
}
.prev {
    left: 0;
}
.next {
    right: 0;
}

/* transport controls over the video */
.player {
    position: absolute;
    left: 0;
    right: 0;
    bottom: 0;
    height: 200px;
    padding: 94px 24px 0;
    background: linear-gradient(rgba(0,0,0,0), rgba(0,0,0,.36) 80px, rgba(0,0,0,.5) 133px, rgba(0,0,0,.6) 162px, rgba(0,0,0,.64));
}
.seek {
    appearance: none;
    display: block;
    width: 100%;
    height: 22px;
    background: linear-gradient(#429ce3, #429ce3) 0 50% / calc(var(--v) - 11px) 2px no-repeat,
                linear-gradient(90deg, transparent var(--v), rgba(255,255,255,.27) var(--v)) 0 50% / 100% 2px no-repeat;
}
.seek::-webkit-slider-thumb {
    appearance: none;
    width: 22px;
    height: 22px;
    border: 2px solid #429ce3;
    border-radius: 50%;
    background: #202020;
}
.times {
    display: flex;
    justify-content: space-between;
    height: 24px;
    line-height: 24px;
    font-size: 11px;
}
.player-buttons {
    display: grid;
    grid-template-columns: 1fr auto 1fr;
    height: 24px;
    margin-top: 8px;
    padding: 0 12px;
}
.player-buttons div {
    display: flex;
    gap: 24px;
}
.player-buttons .right {
    justify-content: flex-end;
}
.player-buttons button {
    width: 24px;
}

/* lettering inside icons */
.vm {
    font-size: 6px;
    font-weight: bold;
    text-anchor: middle;
    fill: #fff;
}
.ps {
    font-size: 12px;
    text-anchor: middle;
    fill: #00c8ff;
}
.skip {
    font-size: 10px;
    font-weight: 600;
    text-anchor: middle;
    fill: #fff;
}
```
